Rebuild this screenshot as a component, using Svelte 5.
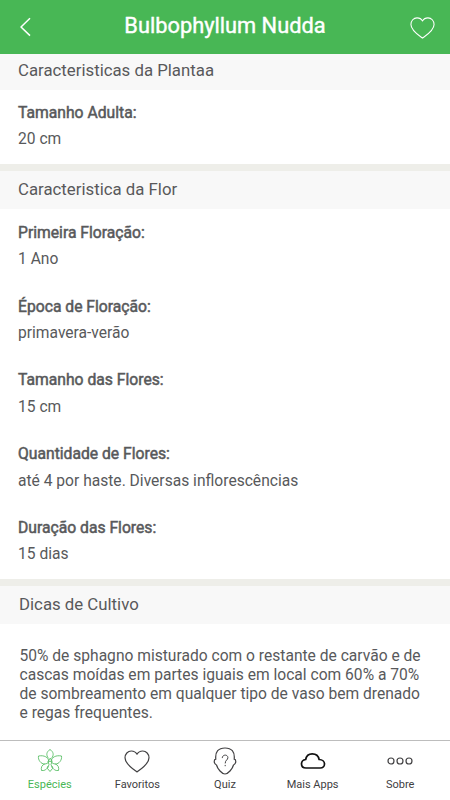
<script lang="ts">
	interface Field {
		label: string;
		value: string;
	}

	interface Section {
		title: string;
		fields: Field[];
	}

	interface Tab {
		id: string;
		label: string;
	}

	const sections: Section[] = [
		{
			title: 'Caracteristicas da Plantaa',
			fields: [{ label: 'Tamanho Adulta:', value: '20 cm' }],
		},
		{
			title: 'Caracteristica da Flor',
			fields: [
				{ label: 'Primeira Floração:', value: '1 Ano' },
				{ label: 'Época de Floração:', value: 'primavera-verão' },
				{ label: 'Tamanho das Flores:', value: '15 cm' },
				{ label: 'Quantidade de Flores:', value: 'até 4 por haste. Diversas inflorescências' },
				{ label: 'Duração das Flores:', value: '15 dias' },
			],
		},
	];

	const tips = [
		'50% de sphagno misturado com o restante de carvão e de',
		'cascas moídas em partes iguais em local com 60% a 70%',
		'de sombreamento em qualquer tipo de vaso bem drenado',
		'e regas frequentes.',
	];

	const tabs: Tab[] = [
		{ id: 'species', label: 'Espécies' },
		{ id: 'favorites', label: 'Favoritos' },
		{ id: 'quiz', label: 'Quiz' },
		{ id: 'apps', label: 'Mais Apps' },
		{ id: 'about', label: 'Sobre' },
	];

	let activeTab = $state('species');
</script>

{#snippet heart()}
	<path d="M14 25C10.5 22.4 2 17 2 10.8C2 7 4.8 4 8.3 4C10.8 4 12.9 5.2 14 7.2C15.1 5.2 17.2 4 19.7 4C23.2 4 26 7 26 10.8C26 17 17.5 22.4 14 25Z" />
{/snippet}

<div class="screen">
	<header class="navbar">
		<button class="nav-button" aria-label="Voltar">
			<svg class="back" viewBox="0 0 12 20"><path d="M11 1.2L2 10L11 18.6" /></svg>
		</button>
		<h1>Bulbophyllum Nudda</h1>
		<button class="nav-button" aria-label="Favoritar">
			<svg class="nav-heart" viewBox="0 0 28 28">{@render heart()}</svg>
		</button>
	</header>

	<main>
		{#each sections as section (section.title)}
			<section>
				<h2>{section.title}</h2>
				<dl>
					{#each section.fields as field (field.label)}
						<div class="field">
							<dt>{field.label}</dt>
							<dd>{field.value}</dd>
						</div>
					{/each}
				</dl>
			</section>
		{/each}
		<section class="tips">
			<h2>Dicas de Cultivo</h2>
			<p>
				{#each tips as line}
					<span>{line}</span>
				{/each}
			</p>
		</section>
	</main>

	<nav class="tabbar">
		{#each tabs as tab (tab.id)}
			<button class="tab" class:active={activeTab === tab.id} onclick={() => (activeTab = tab.id)}>
				<svg class="icon {tab.id}" viewBox="0 0 28 28">
					{#if tab.id === 'species'}
						<path d="M12.2 11C9.8 8 10.5 4.8 14 2.5C17.5 4.8 18.2 8 15.8 11" />
						<path d="M13 14.5C12.5 10 8 8 2.5 9C1.8 13 5 17 8.5 17C10.8 17 12 16 13 14.5Z" />
						<path d="M15 14.5C15.5 10 20 8 25.5 9C26.2 13 23 17 19.5 17C17.2 17 16 16 15 14.5Z" />
						<path d="M8.5 17C5.8 18 4.8 20.5 5.5 23.5C8.8 24 11 22.5 11.8 19.5" />
						<path d="M19.5 17C22.2 18 23.2 20.5 22.5 23.5C19.2 24 17 22.5 16.2 19.5" />
						<path d="M14 11.5L12 14.5L13 17.5L11.5 21.5L14 24.5L16.5 21.5L15 17.5L16 14.5Z" />
					{:else if tab.id === 'favorites'}
						{@render heart()}
					{:else if tab.id === 'quiz'}
						<path d="M4.8 12.2C4 4.5 7.5 1 14 1C20.5 1 24 4.5 23.2 12.2C25.5 12.5 25.2 17 22.5 18C21.5 22 17 27 14 27C11 27 6.5 22 5.5 18C2.8 17 2.5 12.5 4.8 12.2Z" />
						<path class="mark" d="M11.3 10.7C11.3 7.2 16.9 7.2 16.9 10.7C16.9 13 14.2 13 14.2 16M14.2 18.3V18.8" />
					{:else if tab.id === 'apps'}
						<path d="M7 21C4.2 21 2.5 19.2 2.5 17C2.5 14.8 4.2 12.8 6.7 12.5C7.3 9 10 6.8 13.2 6.8C16.8 6.8 19.5 9 20.1 12.5C23.3 12.6 25.5 14.6 25.5 17C25.5 19.3 23.7 21 21.3 21Z" />
					{:else}
						<circle cx="5" cy="14" r="3" />
						<circle cx="14" cy="14" r="3" />
						<circle cx="23" cy="14" r="3" />
					{/if}
				</svg>
				<span>{tab.label}</span>
			</button>
		{/each}
	</nav>
</div>

<style>
	:global(body) {
		margin: 0;
	}

	.screen {
		display: flex;
		flex-direction: column;
		height: 800px;
		background: #fff;
		color: #58595b;
		font-family: Roboto, sans-serif;
		overflow: hidden;
	}

	button {
		padding: 0;
		border: none;
		background: none;
		font: inherit;
		color: inherit;
		cursor: pointer;
	}

	svg {
		display: block;
		fill: none;
		stroke: currentColor;
		stroke-linejoin: round;
		stroke-linecap: round;
	}

	.navbar {
		flex: none;
		display: flex;
		align-items: center;
		justify-content: space-between;
		height: 54px;
		padding: 0 14px 0 19px;
		box-sizing: border-box;
		background: #48b755;
		color: #fff;
	}

	.nav-button {
		flex: none;
	}

	.back {
		width: 12px;
		height: 20px;
		stroke-width: 1.5;
		stroke-linecap: butt;
	}

	.nav-heart {
		width: 27px;
		height: 27px;
		stroke-width: 1.1;
	}

	h1 {
		margin: 0 0 3px 10px;
		font-size: 21.8px;
		font-weight: 400;
		line-height: 28px;
		-webkit-text-stroke: 0.4px currentColor;
	}

	main {
		flex: 1;
		min-height: 0;
		overflow: hidden;
	}

	section + section {
		border-top: 7px solid #eeeee9;
	}

	h2 {
		height: 38px;
		margin: 0;
		padding: 0 18px;
		background: #f8f8f8;
		font-size: 16.8px;
		font-weight: 400;
		line-height: 37px;
	}

	section:first-child h2 {
		height: 36px;
		line-height: 32px;
	}

	dl {
		display: flex;
		flex-direction: column;
		gap: 20.9px;
		margin: 0;
		padding: 10px 18px 11.2px;
	}

	section + section dl {
		padding-top: 11px;
	}

	.field {
		line-height: 26.4px;
		font-size: 15.6px;
	}

	dt {
		font-size: 15.7px;
		-webkit-text-stroke: 0.5px currentColor;
	}

	dd {
		margin: 0;
	}

	.tips h2 {
		padding-left: 19px;
	}

	p {
		margin: 0;
		padding: 23px 19px 0 19.5px;
		font-size: 15.6px;
		line-height: 19.2px;
	}

	p span {
		display: block;
		white-space: nowrap;
	}

	.tabbar {
		flex: none;
		display: flex;
		height: 60px;
		padding: 0 6px;
		box-sizing: border-box;
		border-top: 1px solid #bdbdbd;
		background: #fff;
	}

	.tab {
		flex: 1;
		display: flex;
		flex-direction: column;
		align-items: center;
		gap: 2px;
		padding-top: 6px;
		color: #414042;
		font-size: 11px;
		line-height: 16px;
	}

	.tab.active {
		color: #48b755;
	}

	.icon {
		width: 28px;
		height: 28px;
		stroke-width: 1.2;
	}

	.icon.species {
		stroke-width: 0.8;
	}

	.mark {
		stroke-width: 1;
	}

	.icon.apps {
		stroke: #111;
		stroke-width: 1.7;
	}
</style>
